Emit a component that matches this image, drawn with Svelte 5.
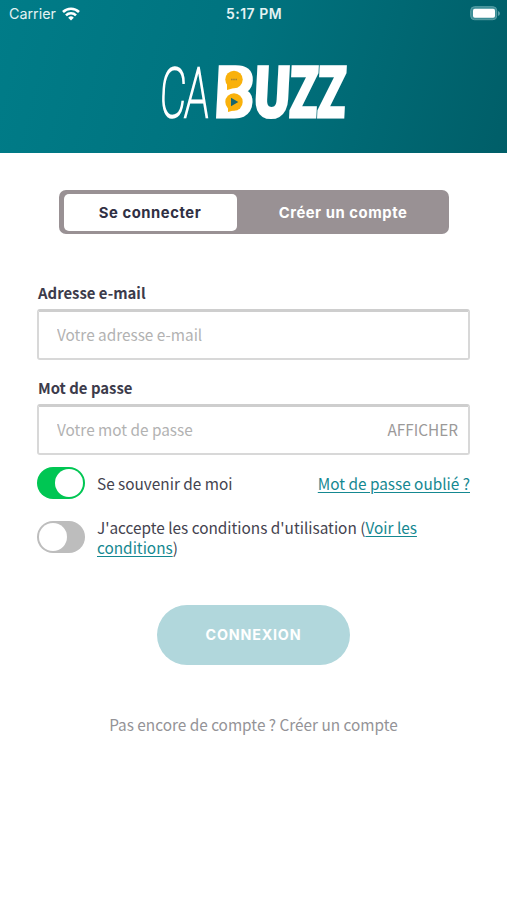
<script lang="ts">
	let mode = $state('login');
	let remember = $state(true);
	let accepted = $state(false);
	let visible = $state(false);
	let email = $state('');
	let password = $state('');
</script>

<div class="screen">
	<header>
		<div class="status">
			<div class="carrier">
				<span>Carrier</span>
				<svg width="18" height="14" viewBox="0 0 18 14" fill="none" stroke="#fff" stroke-width="2.6">
					<path d="M1 5a11.4 11.4 0 0 1 16 0" />
					<path d="M4 8.3a7.1 7.1 0 0 1 10 0" />
					<path d="M9 13.5 6.2 10.7a4 4 0 0 1 5.6 0z" fill="#fff" stroke="none" />
				</svg>
			</div>
			<span class="time">5:17 PM</span>
			<svg class="battery" width="30" height="15" viewBox="0 0 30 15">
				<rect x="0.7" y="0.7" width="26" height="13" rx="3.8" fill="#3c8e97" stroke="#5aa0a7" />
				<rect x="3" y="2.8" width="22" height="9" rx="1.8" fill="#fff" />
				<path d="M28 5v5q2-.8 2-2.5T28 5z" fill="#5aa0a7" />
			</svg>
		</div>
		<svg class="logo" width="190" height="60" viewBox="0 0 190 60" role="img" aria-label="CABUZZ">
			<g class="thin" transform="translate(2 53.8) skewX(-3)">
				<text textLength="26" lengthAdjust="spacingAndGlyphs" x="-2">C</text>
				<text textLength="24" lengthAdjust="spacingAndGlyphs" x="23">A</text>
			</g>
			<g class="heavy" transform="translate(56 53.8) skewX(-3)">
				<text textLength="39" lengthAdjust="spacingAndGlyphs" x="-1">B</text>
				<text textLength="36" lengthAdjust="spacingAndGlyphs" x="38">U</text>
				<text textLength="28" lengthAdjust="spacingAndGlyphs" x="73.5">Z</text>
				<text textLength="28" lengthAdjust="spacingAndGlyphs" x="101.5">Z</text>
			</g>
			<g fill="#f9b10b">
				<circle cx="75" cy="16.5" r="8.7" />
				<path d="M68 20v7l7-2z" />
				<circle cx="75" cy="39" r="8.7" />
				<path d="M69 43v6l7-2z" />
			</g>
			<path d="M72 34.7v8.5l7.3-4.2z" fill="#17666d" />
			<path d="M72 16.5h6" stroke="#a08435" stroke-width="1.6" stroke-dasharray="1.6 .6" />
		</svg>
	</header>

	<main>
		<div class="tabs">
			<button class:active={mode === 'login'} onclick={() => (mode = 'login')}>Se connecter</button>
			<button class:active={mode === 'signup'} onclick={() => (mode = 'signup')}>Créer un compte</button>
		</div>

		<label for="email">Adresse e-mail</label>
		<div class="field">
			<input id="email" type="email" placeholder="Votre adresse e-mail" bind:value={email} />
		</div>

		<label for="password">Mot de passe</label>
		<div class="field">
			<input
				id="password"
				type={visible ? 'text' : 'password'}
				placeholder="Votre mot de passe"
				bind:value={password}
			/>
			<button class="show" onclick={() => (visible = !visible)}>AFFICHER</button>
		</div>

		<div class="option">
			<button class="switch" class:on={remember} aria-label="Se souvenir de moi" onclick={() => (remember = !remember)}></button>
			<span>Se souvenir de moi</span>
			<a class="forgot" href="#forgot">Mot de passe oublié ?</a>
		</div>
		<div class="option terms">
			<button class="switch" class:on={accepted} aria-label="Accepter les conditions" onclick={() => (accepted = !accepted)}></button>
			<span>J'accepte les conditions d'utilisation (<a href="#terms">Voir les<br />conditions</a>)</span>
		</div>

		<button class="submit">CONNEXION</button>
		<p class="register">Pas encore de compte ? Créer un compte</p>
	</main>
</div>

<style>
	:global(body) {
		margin: 0;
		background: #fff;
	}
	.screen {
		height: 900px;
		overflow: hidden;
		background: #fff;
		color: #44434f;
		font-family: 'Noto Sans CJK SC', 'Noto Sans', sans-serif;
		font-size: 15.35px;
	}
	button {
		border: 0;
		padding: 0;
		background: none;
		font: inherit;
		cursor: pointer;
	}
	header {
		height: 153px;
		box-sizing: border-box;
		background: linear-gradient(105deg, #007c88 0%, #00737f 45%, #005e68 100%);
	}
	.status {
		display: grid;
		grid-template-columns: 1fr auto 1fr;
		align-items: center;
		height: 27px;
		padding: 0 7px 0 9px;
		color: #e4f2f3;
		font: 14.3px/27px Inter, sans-serif;
	}
	.carrier {
		display: flex;
		align-items: center;
		gap: 6px;
	}
	.time {
		font-weight: 600;
		font-size: 14px;
		letter-spacing: 0.5px;
		margin-right: 1px;
	}
	.battery {
		justify-self: end;
	}
	.logo {
		display: block;
		margin: 36px 0 0 159px;
		fill: #fff;
		overflow: visible;
	}
	.thin {
		font: 100 69px Roboto, sans-serif;
		stroke: #fff;
		stroke-width: 2.3;
	}
	.heavy {
		font: 900 71px Roboto, sans-serif;
		stroke: #fff;
		stroke-width: 2.8;
	}
	main {
		display: flex;
		flex-direction: column;
		padding: 37px 37px 0;
	}
	.tabs {
		display: flex;
		align-self: center;
		width: 390px;
		height: 44px;
		box-sizing: border-box;
		padding: 4px 5px 3px;
		margin-bottom: 48px;
		border-radius: 7px;
		background: #999194;
		font: 700 14.8px Inter, sans-serif;
	}
	.tabs button {
		flex: 0 0 173px;
		border-radius: 5px;
		color: #fff;
		letter-spacing: 0.55px;
	}
	.tabs button + button {
		flex: 1;
		padding-left: 6px;
	}
	.tabs .active {
		background: #fff;
		color: #303044;
	}
	label {
		height: 22px;
		margin: 0 0 5px 1px;
		line-height: 22px;
		font-size: 14.9px;
		font-weight: 700;
		color: #3c3b4b;
	}
	.field {
		display: flex;
		align-items: center;
		height: 51px;
		box-sizing: border-box;
		border: 2px solid #d8d8d8;
		border-top: 3px solid #cecece;
		border-radius: 3px;
		padding: 0 10px 2px 18px;
		margin-bottom: 17px;
	}
	input {
		flex: 1;
		min-width: 0;
		border: 0;
		padding: 0;
		outline: 0;
		background: none;
		font: inherit;
	}
	input::placeholder {
		color: #b2b2b2;
		opacity: 1;
	}
	.show {
		color: #9b9999;
	}
	.option {
		display: flex;
		align-items: center;
		height: 32px;
		margin-top: -5px;
	}
	.terms {
		margin-top: 22px;
		line-height: 20px;
	}
	.switch {
		flex: none;
		display: flex;
		width: 48px;
		height: 32px;
		margin-right: 12px;
		padding: 2px;
		border-radius: 16px;
		background: #bdbdbd;
	}
	.switch::before {
		content: '';
		width: 28px;
		height: 28px;
		border-radius: 50%;
		background: #fff;
	}
	.switch.on {
		justify-content: flex-end;
		background: #00c653;
	}
	a {
		color: #158891;
		text-underline-offset: 2px;
	}
	.forgot {
		margin-left: auto;
	}
	.submit {
		align-self: center;
		width: 193px;
		height: 60px;
		margin-top: 52px;
		padding-bottom: 2px;
		border-radius: 30px;
		background: #b1d7dc;
		color: #fff;
		font: 700 14.3px Inter, sans-serif;
		letter-spacing: 0.8px;
	}
	.register {
		margin: 47px 0 0;
		text-align: center;
		line-height: 24px;
		color: #949397;
	}
</style>
